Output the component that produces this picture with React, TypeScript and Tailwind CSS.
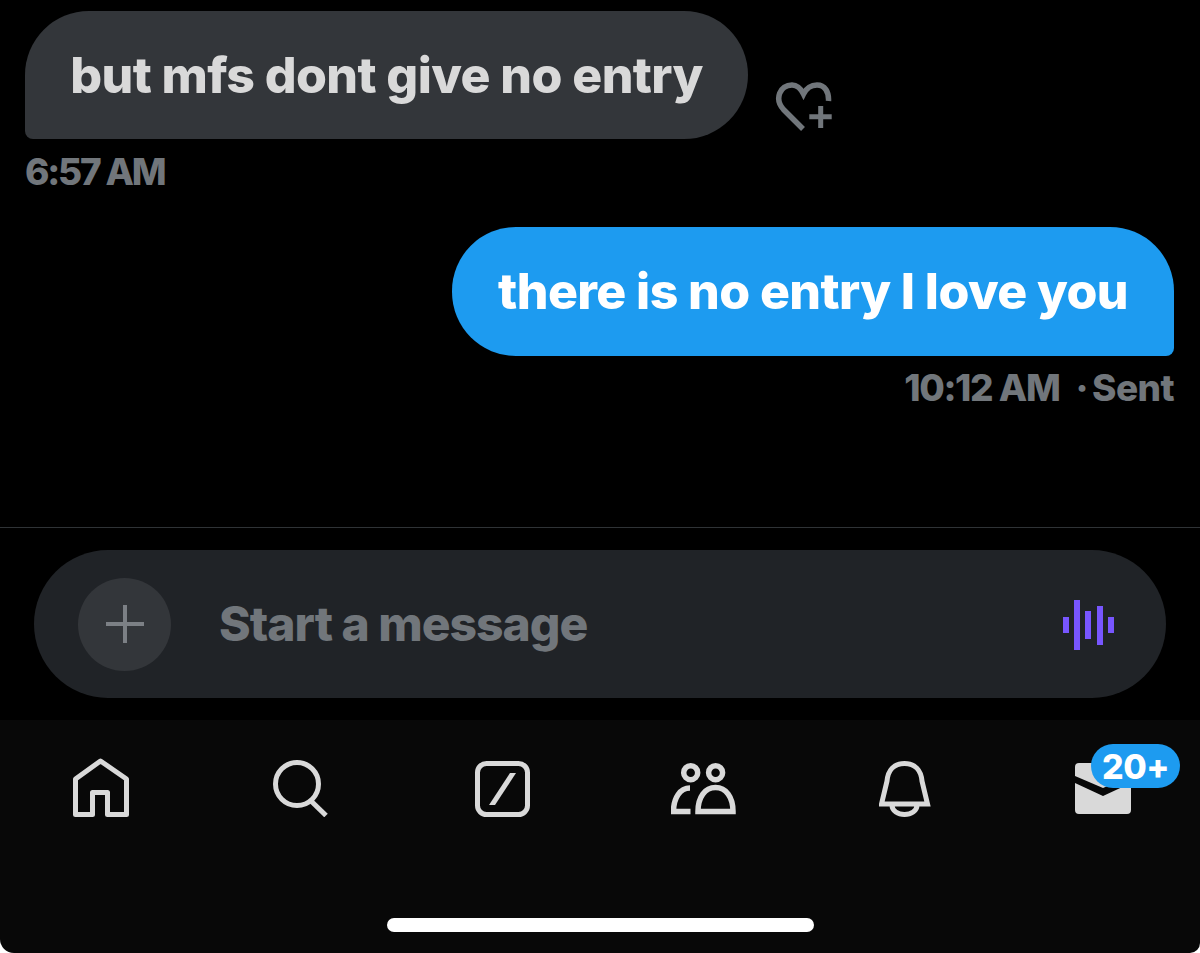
const fontStack = { fontFamily: 'Inter, "Liberation Sans", sans-serif' }

const HomeIcon = () => (
  <svg width="60" height="62" viewBox="0 0 60 62" fill="none" stroke="#d9d9d9" strokeWidth="5" strokeLinejoin="round">
    <path d="M29.5 4 L55.5 22 V57.5 H36.5 V35.5 H21.5 V57.5 H4.5 V22 Z" />
  </svg>
)

const SearchIcon = () => (
  <svg width="60" height="60" viewBox="0 0 60 60" fill="none" stroke="#d9d9d9" strokeWidth="5">
    <circle cx="24" cy="27" r="21.5" />
    <path d="M37 43 L53 58.5" />
  </svg>
)

const SlashIcon = () => (
  <svg width="60" height="62" viewBox="0 0 60 62" fill="none">
    <rect x="2.5" y="6.5" width="50" height="51" rx="9" stroke="#d9d9d9" strokeWidth="5" />
    <path d="M35 16 H41 L20 48 H14 Z" fill="#d9d9d9" />
  </svg>
)

const PeopleIcon = () => (
  <svg width="68" height="60" viewBox="0 0 68 60" fill="none" stroke="#d9d9d9" strokeWidth="5.5">
    <circle cx="19.7" cy="15.7" r="7" />
    <circle cx="44.6" cy="15.7" r="7" />
    <path d="M19 31 C9 31 2.5 41 2.5 54.5 H19.5" />
    <path d="M27 54.5 H62 C62 40 55 30.5 44.5 30.5 C34 30.5 27 40 27 54.5 Z" />
  </svg>
)

const BellIcon = () => (
  <svg width="52" height="60" viewBox="0 0 52 60" fill="none" stroke="#d9d9d9" strokeWidth="5">
    <path d="M2.5 47 L8 24 C9 13 15 6.5 25.5 6.5 C36 6.5 42 13 43 24 L48.5 47 Z" />
    <path d="M13 48 C13 54 19 57.5 25.5 57.5 C32 57.5 38 54 38 48" />
  </svg>
)

const MailIcon = () => (
  <svg width="56" height="51" viewBox="0 0 56 51" fill="#d9d9d9">
    <path d="M0 4 Q0 0 4 0 H52 Q56 0 56 4 V13 L28 25 L0 13 Z" />
    <path d="M0 20 L28 33 L56 20 V47 Q56 51 52 51 H4 Q0 51 0 47 Z" />
  </svg>
)

const HeartPlusIcon = () => (
  <svg width="58" height="50" viewBox="0 0 58 50" fill="none" stroke="#71767b">
    <path d="M28 47 L8.5 27.5 C-1 17 5 3 17 3 C22 3 26 7 28.5 12 C31 7 35 3 42 3 C50 3 54 10 53.5 19" strokeWidth="5.5" />
    <path d="M34.3 34.7 H56.7 M45.7 24 V46" strokeWidth="5" />
  </svg>
)

const VoiceIcon = () => (
  <svg width="51" height="51" viewBox="0 0 51 51" fill="#7856ff">
    <rect x="0" y="17" width="6" height="16" />
    <rect x="11" y="0" width="6" height="50" />
    <rect x="22" y="11" width="6" height="28" />
    <rect x="34" y="6" width="6" height="39" />
    <rect x="45" y="17" width="6" height="16" />
  </svg>
)

export default function App() {
  return (
    <div className="w-[1200px] h-[953px] bg-white overflow-hidden flex flex-col font-extrabold" style={fontStack}>
      {/* messages */}
      <div className="h-[527px] bg-black pl-[25px] pr-[26px] pt-[11px] flex flex-col">
        <div className="flex items-end gap-[27px]">
          <div className="w-[723px] h-[128px] bg-[#33363a] rounded-[64px] rounded-bl-[8px] flex items-center justify-center text-[50px] tracking-[-0.6px] text-[#d9d9d9]">
            but mfs dont give no entry
          </div>
          <div className="mb-[7px]"><HeartPlusIcon /></div>
        </div>
        <div className="mt-[13px] text-[37px] leading-[40px] tracking-[-2.2px] text-[#71767b]">6:57 AM</div>

        <div className="mt-[35px] self-end w-[722px] h-[129px] bg-[#1d9bf0] rounded-[64px] rounded-br-[8px] flex items-center justify-center text-[50px] tracking-[-0.6px] text-white">
          there is no entry I love you
        </div>
        <div className="mt-[12px] self-end flex text-[37px] leading-[40px] tracking-[-1.4px] text-[#71767b]">
          <span className="mr-[16px]">10:12 AM</span>
          <span className="mr-[5px]">·</span>
          <span className="tracking-[-0.6px]">Sent</span>
        </div>
      </div>

      {/* composer */}
      <div className="bg-black border-t border-[#2f3336] h-[193px] pt-[22px] px-[34px]">
        <div className="h-[148px] rounded-[74px] bg-[#202327] flex items-center pl-[44px] pr-[52px]">
          <div className="w-[93px] h-[93px] rounded-full bg-[#33363a] flex items-center justify-center">
            <svg width="38" height="38" viewBox="0 0 38 38" stroke="#7c8085" strokeWidth="4">
              <path d="M0 19 H38 M19 0 V38" />
            </svg>
          </div>
          <div className="ml-[48px] text-[48px] tracking-[-1px] text-[#71767b]">Start a message</div>
          <div className="ml-auto mt-[3px]"><VoiceIcon /></div>
        </div>
      </div>

      {/* bottom nav */}
      <div className="flex-1 bg-[#080808] rounded-bl-[14px] rounded-br-[10px] relative">
        <div className="flex pt-[37px] pl-[71px] items-start">
          <div className="w-[202px]"><HomeIcon /></div>
          <div className="w-[202px]"><SearchIcon /></div>
          <div className="w-[196px]"><SlashIcon /></div>
          <div className="w-[208px]"><PeopleIcon /></div>
          <div className="w-[196px]"><BellIcon /></div>
          <div className="mt-[6px]"><MailIcon /></div>
        </div>
        <div className="absolute left-[1091px] top-[24px] w-[89px] h-[44px] rounded-full bg-[#1d9bf0] text-white text-[34px] flex items-center justify-center tracking-[-0.5px]">
          20+
        </div>
        <div className="w-[427px] h-[14px] rounded-full bg-white mx-auto mt-[99px]" />
      </div>
    </div>
  )
}
